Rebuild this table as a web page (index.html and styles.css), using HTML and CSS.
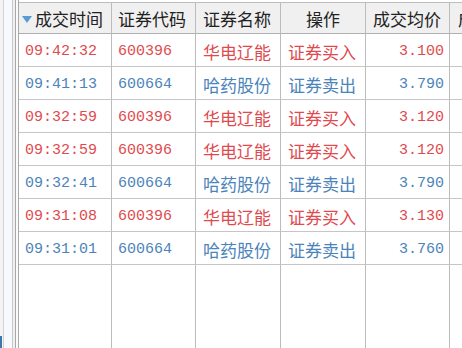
FILE: index.html
```html
<!DOCTYPE html>
<html lang="zh-CN">
<head>
<meta charset="utf-8">
<link rel="stylesheet" href="styles.css">
</head>
<body>
<div class="page">
  <div class="side">
    <div class="s1"><div class="s1-mark"></div></div>
    <div class="s2"></div>
    <div class="s3"></div>
    <div class="s4"></div>
  </div>
  <div class="grid">
    <div class="row head">
      <div class="c c1"><span class="tri"></span>成交时间</div>
      <div class="c c2">证券代码</div>
      <div class="c c3">证券名称</div>
      <div class="c c4 center">操作</div>
      <div class="c c5">成交均价</div>
      <div class="c c6">成交金额</div>
    </div>
    <div class="row buy">
      <div class="c c1 num">09:42:32</div><div class="c c2 num">600396</div><div class="c c3">华电辽能</div><div class="c c4">证券买入</div><div class="c c5 num right">3.100</div><div class="c c6"></div>
    </div>
    <div class="row sell">
      <div class="c c1 num">09:41:13</div><div class="c c2 num">600664</div><div class="c c3">哈药股份</div><div class="c c4">证券卖出</div><div class="c c5 num right">3.790</div><div class="c c6"></div>
    </div>
    <div class="row buy">
      <div class="c c1 num">09:32:59</div><div class="c c2 num">600396</div><div class="c c3">华电辽能</div><div class="c c4">证券买入</div><div class="c c5 num right">3.120</div><div class="c c6"></div>
    </div>
    <div class="row buy">
      <div class="c c1 num">09:32:59</div><div class="c c2 num">600396</div><div class="c c3">华电辽能</div><div class="c c4">证券买入</div><div class="c c5 num right">3.120</div><div class="c c6"></div>
    </div>
    <div class="row sell">
      <div class="c c1 num">09:32:41</div><div class="c c2 num">600664</div><div class="c c3">哈药股份</div><div class="c c4">证券卖出</div><div class="c c5 num right">3.790</div><div class="c c6"></div>
    </div>
    <div class="row buy">
      <div class="c c1 num">09:31:08</div><div class="c c2 num">600396</div><div class="c c3">华电辽能</div><div class="c c4">证券买入</div><div class="c c5 num right">3.130</div><div class="c c6"></div>
    </div>
    <div class="row sell">
      <div class="c c1 num">09:31:01</div><div class="c c2 num">600664</div><div class="c c3">哈药股份</div><div class="c c4">证券卖出</div><div class="c c5 num right">3.760</div><div class="c c6"></div>
    </div>
    <div class="row filler">
      <div class="c c1"></div><div class="c c2"></div><div class="c c3"></div><div class="c c4"></div><div class="c c5"></div><div class="c c6"></div>
    </div>
  </div>
</div>
</body>
</html>
```
FILE: styles.css
```css
html, body {
  margin: 0;
  padding: 0;
  background: #ffffff;
}
body {
  width: 462px;
  height: 348px;
  overflow: hidden;
  font-family: "Noto Sans CJK SC", "Noto Sans", sans-serif;
}
.page {
  display: flex;
  width: 462px;
  height: 348px;
  overflow: hidden;
}
.side {
  display: flex;
  flex: 0 0 18px;
  height: 348px;
}
.s1 {
  width: 3px;
  background: #f4f4f4;
  border-right: 1px solid #d2d2d2;
  display: flex;
  flex-direction: column;
  justify-content: flex-end;
}
.s1-mark {
  width: 2px;
  height: 12px;
  background: #3b78ae;
}
.s2 {
  width: 8px;
  background: #f6f9fd;
  border-right: 1px solid #c8c8c8;
}
.s3 {
  width: 2px;
  background: #f0f0f0;
  border-right: 1px solid #a9a9a9;
}
.s4 {
  width: 2px;
  background: #fafafa;
}
.grid {
  flex: 1 1 auto;
  display: flex;
  flex-direction: column;
  border-left: 1px solid #a8a8a8;
  padding-top: 2px;
  background: #fff;
  min-width: 0;
}
.row {
  display: grid;
  grid-template-columns: 93px 84px 85px 85px 84px 84px;
  height: 33px;
  flex: 0 0 auto;
}
.row.head {
  height: 31px;
  border-top: 1px solid #bdbdbd;
  background: #f0f0f0;
  color: #222;
}
.row.filler {
  flex: 1 1 auto;
}
.c {
  box-sizing: border-box;
  border-right: 1px solid #bcbcbc;
  border-bottom: 1px solid #c6c6c6;
  display: flex;
  align-items: center;
  padding-left: 6px;
  padding-right: 5px;
  padding-top: 2px;
  font-size: 17px;
  line-height: 1;
  white-space: nowrap;
  overflow: hidden;
}
.row.filler .c {
  border-bottom: none;
}
.head .c {
  border-bottom-color: #b0b0b0;
  padding-top: 1px;
}
.head .c1 {
  padding-left: 3px;
}
.head .c3, .head .c5, .c3, .c4, .c5 {
  padding-left: 7px;
}
.head .c6 {
  padding-left: 8px;
}
.center {
  justify-content: center;
  padding-left: 0;
}
.head .center {
  padding-left: 0;
  padding-right: 0;
}
.right {
  justify-content: flex-end;
}
.num {
  font-family: "Liberation Mono", "DejaVu Sans Mono", monospace;
  font-size: 15px;
}
.tri {
  width: 0;
  height: 0;
  border-left: 5px solid transparent;
  border-right: 5px solid transparent;
  border-top: 7px solid #5b9bd5;
  margin-right: 3px;
  margin-top: 1px;
}
.buy {
  color: #df4a4e;
}
.sell {
  color: #4b84ba;
}
```
